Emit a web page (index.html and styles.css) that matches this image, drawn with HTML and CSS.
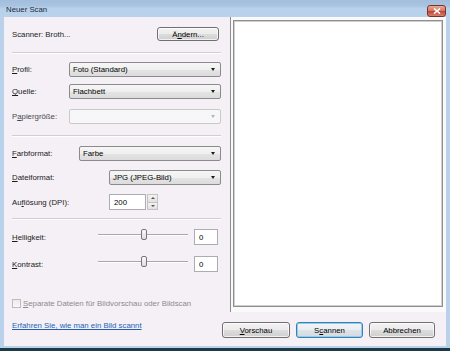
FILE: index.html
```html
<!DOCTYPE html>
<html lang="de">
<head>
  <meta charset="UTF-8">
  <title>Neuer Scan</title>
  <link rel="stylesheet" href="styles.css">
</head>
<body>

  <div class="window">
    <div class="titlebar">
      <span class="title">Neuer Scan</span>
      <span class="close">
        <svg width="8" height="6" viewBox="0 0 8 6"><path d="M1 0.5 L7 5.5 M7 0.5 L1 5.5" stroke="#fff" stroke-width="1.6"/></svg>
      </span>
    </div>

    <div class="client">
      <div class="main">
        <div class="settings">
          <div class="row scanner-row">
            <span>Scanner: Broth...</span>
            <button class="btn btn-change">Ä<u>n</u>dern...</button>
          </div>
          <div class="sep"></div>

          <div class="row row-first">
            <label class="lbl lbl-short"><u>P</u>rofil:</label>
            <div class="combo"><span>Foto (Standard)</span><i class="arrow"></i></div>
          </div>
          <div class="row row-tight">
            <label class="lbl lbl-short"><u>Q</u>uelle:</label>
            <div class="combo"><span>Flachbett</span><i class="arrow"></i></div>
          </div>
          <div class="row">
            <label class="lbl lbl-short muted">P<u>a</u>piergröße:</label>
            <div class="combo combo-disabled"><span></span><i class="arrow"></i></div>
          </div>
          <div class="sep"></div>

          <div class="row row-after-sep">
            <label class="lbl lbl-mid"><u>F</u>arbformat:</label>
            <div class="combo"><span>Farbe</span><i class="arrow"></i></div>
          </div>
          <div class="row row-after-sep">
            <label class="lbl lbl-long"><u>D</u>ateiformat:</label>
            <div class="combo"><span>JPG (JPEG-Bild)</span><i class="arrow"></i></div>
          </div>
          <div class="row row-after-sep row-tall">
            <label class="lbl lbl-long">Au<u>f</u>lösung (DPI):</label>
            <div class="spin-input">200</div>
            <div class="spin-btns">
              <span class="spin-up"><i class="tri-up"></i></span>
              <span class="spin-down"><i class="tri-down"></i></span>
            </div>
          </div>
          <div class="sep sep-close"></div>

          <div class="row row-after-sep row-tall">
            <label class="lbl lbl-slider"><u>H</u>elligkeit:</label>
            <div class="slider"><div class="track"></div><div class="thumb"></div></div>
            <div class="num">0</div>
          </div>
          <div class="row row-slider2 row-tall">
            <label class="lbl lbl-slider"><u>K</u>ontrast:</label>
            <div class="slider"><div class="track"></div><div class="thumb"></div></div>
            <div class="num">0</div>
          </div>

          <div class="row check-row">
            <span class="checkbox"></span>
            <span class="disabled"><u>S</u>eparate Dateien für Bildvorschau oder Bildscan</span>
          </div>
        </div>

        <div class="preview">
          <div class="preview-box"></div>
        </div>
      </div>

      <div class="footer">
        <a class="help-link" href="#">Erfahren Sie, wie man ein Bild scannt</a>
        <div class="actions">
          <button class="btn btn-preview"><u>V</u>orschau</button>
          <button class="btn btn-scan btn-default">S<u>c</u>annen</button>
          <button class="btn btn-cancel">Abbrechen</button>
        </div>
      </div>
    </div>
  </div>

</body>
</html>
```

FILE: styles.css
```css
* { box-sizing: border-box; }
body { margin: 0; font-family: "Liberation Sans", Arial, sans-serif; font-size: 7.8px; color: #1b1b1b; }
u { text-decoration: underline; }

.window { width: 450px; height: 351px; background: #b9d1eb; padding: 0 4px; border-bottom: 3px solid #1c3a46; display: flex; flex-direction: column; }
.titlebar { height: 17px; margin: 0 -4px; padding: 0 4px 0 6px; display: flex; align-items: center; background: linear-gradient(#a3bedc 0%, #a9c4e1 35%, #b8d1ec 50%, #bad2ec 100%); }
.title { flex: 1; color: #1e2a36; padding-top: 2px; }
.close { width: 19px; height: 12px; margin-top: 4px; border: 1px solid #7a3327; border-radius: 3px; display: flex; align-items: center; justify-content: center; background: linear-gradient(#e9aa9a 0%, #d57a66 45%, #c0473a 55%, #d8806c 100%); }

.client { height: 329px; background: #f4f0f5; display: flex; flex-direction: column; }
.main { display: flex; height: 295px; }

.settings { width: 226px; padding: 0 9px 0 8px; }
.row { display: flex; align-items: center; height: 15px; margin-top: 10px; }
.row-first { margin-top: 8px; }
.row-tight { margin-top: 7px; }
.row-after-sep { margin-top: 9px; }
.row-tall { height: 16px; }
.row-slider2 { margin-top: 11px; }
.scanner-row { height: 14px; justify-content: space-between; }

.sep { height: 2px; margin-top: 11px; border-top: 1px solid #d2cdd3; border-bottom: 1px solid #fff; }
.sep-close { margin-top: 8px; }

.lbl { flex: none; }
.lbl-short { width: 57px; }
.lbl-mid { width: 67px; }
.lbl-long { width: 97px; }
.lbl-slider { width: 86px; }
.muted { color: #4a484c; }
.disabled { color: #8c8a8e; }

.combo { flex: 1; height: 15px; padding: 0 5px 0 3px; display: flex; align-items: center; border: 1px solid #8b8b8b; border-radius: 2px; background: linear-gradient(#f6f6f6 0%, #efefef 50%, #e4e4e4 51%, #dcdcdc 100%); color: #000; }
.combo span { flex: 1; }
.arrow { width: 0; height: 0; border-left: 2.5px solid transparent; border-right: 2.5px solid transparent; border-top: 3px solid #1a1a1a; }
.combo-disabled { background: #f7f6f8; border-color: #cbc9cc; }
.combo-disabled .arrow { border-top-color: #b5b5b5; }

.spin-input { width: 37px; height: 16px; padding-left: 4px; display: flex; align-items: center; background: #fff; border: 1px solid #abadb3; color: #000; }
.spin-btns { width: 11px; height: 16px; margin-left: 1px; display: flex; flex-direction: column; }
.spin-btns span { flex: 1; display: flex; align-items: center; justify-content: center; border: 1px solid #c3c3c3; background: linear-gradient(#f4f4f4, #e1e1e1); }
.spin-down { border-top: none !important; }
.tri-up { border-left: 2px solid transparent; border-right: 2px solid transparent; border-bottom: 2px solid #555; }
.tri-down { border-left: 2px solid transparent; border-right: 2px solid transparent; border-top: 2px solid #555; }

.slider { width: 90px; height: 16px; position: relative; align-self: flex-start; }
.track { height: 2px; margin-top: 5px; border-top: 1px solid #a9a7aa; border-bottom: 1px solid #fff; }
.thumb { position: absolute; left: 43px; top: 0; width: 6px; height: 11px; border: 1px solid #777; border-radius: 2px; background: linear-gradient(#fafafa, #dcdcdc); }
.num { width: 24px; height: 16px; margin-left: 6px; padding-left: 4px; display: flex; align-items: center; background: #fff; border: 1px solid #abadb3; color: #000; }

.check-row { height: 9px; margin-top: 27px; }
.checkbox { width: 9px; height: 9px; margin-right: 2px; border: 1px solid #bdbbbe; background: linear-gradient(#ebebeb, #f7f7f7); }

.preview { flex: 1; padding: 3px 3px 5px 2px; border-left: 1px solid #8e8e8e; background: #fafafa; }
.preview-box { height: 100%; background: #fff; border: 1px solid #8f8f8f; box-shadow: inset 0 0 0 1px #cfcfcf; }

.footer { flex: 1; display: flex; align-items: flex-start; padding: 0 11px 0 8px; }
.help-link { margin-top: 9px; line-height: 10px; color: #1d62b5; }
.actions { margin-left: auto; margin-top: 10px; display: flex; gap: 6px; }

.btn { height: 16px; padding: 0; font: inherit; color: #000; border: 1px solid #707070; border-radius: 3px; background: linear-gradient(#f3f3f3 0%, #ebebeb 50%, #dddddd 51%, #cfcfcf 100%); box-shadow: inset 0 0 0 1px rgba(255,255,255,0.7); }
.btn-change { width: 62px; height: 14px; margin-right: 2px; }
.btn-preview { width: 68px; }
.btn-scan { width: 67px; }
.btn-cancel { width: 66px; }
.btn-default { border-color: #3c7fb1; box-shadow: inset 0 0 0 1px #8fcdf0; background: linear-gradient(#f2f5f7 0%, #eaeef1 50%, #dde3e8 51%, #d2dbe1 100%); }
```
